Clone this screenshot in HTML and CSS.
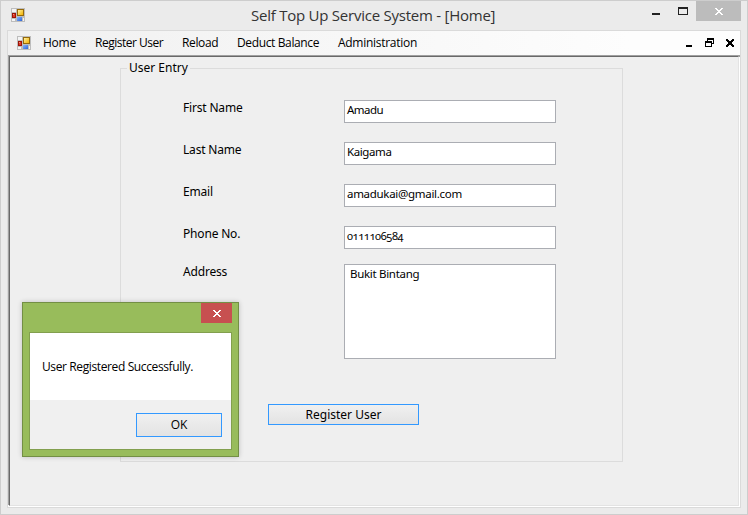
FILE: index.html
```html
<!DOCTYPE html>
<html lang="en">
<head>
<meta charset="utf-8">
<title>Self Top Up Service System - [Home]</title>
<link rel="stylesheet" href="styles.css">
</head>
<body>
<svg class="defs" width="0" height="0">
  <defs>
    <linearGradient id="gold" x2="1" y2="1"><stop offset="0" stop-color="#fff0a0"/><stop offset="1" stop-color="#f2b200"/></linearGradient>
    <linearGradient id="blue" x2="1" y2="1"><stop offset="0" stop-color="#86b4fa"/><stop offset="1" stop-color="#2f66d8"/></linearGradient>
    <symbol id="form-icon" viewBox="0 0 14 14">
      <path fill="#bdbdbd" d="M0 0h14v14H0z"/>
      <path fill="#f4f4f4" d="M1 1h4v3H1zM1 11h3v2H1zM12 10h1v3h-1z"/>
      <path fill="#9c1408" d="M1 5h4v5H1z"/><path fill="#e03c28" d="M2 6h2v3H2z"/><path fill="#f09080" d="M2 6h1v1H2z"/>
      <path fill="#95690c" d="M6 1h7v7H6z"/><path fill="url(#gold)" d="M7 2h5v5H7z"/>
      <path fill="url(#blue)" d="M6 9h5v4H6z"/>
    </symbol>
  </defs>
</svg>
<div class="window">
  <header class="titlebar">
    <svg class="app-icon"><use href="#form-icon"/></svg>
    <h1 class="title">Self Top Up Service System - [Home]</h1>
    <svg class="controls" width="100" height="20" shape-rendering="crispEdges">
      <path fill="#bcbcbc" d="M51 0h45v20H51z"/>
      <path fill="#222" d="M7 12h8v2H7z"/>
      <path fill="#222" fill-rule="evenodd" d="M33 6h10v8H33zM34 8v5h8V8z"/>
      <path fill="#fff" d="M70 7h2v1h1v1h2V8h1V7h2v1h-1v1h-1v1h-1v1h1v1h1v1h1v1h-2v-1h-1v-1h-2v1h-1v1h-2v-1h1v-1h1v-1h1v-1h-1V9h-1V8h-1z"/>
    </svg>
  </header>
  <div class="client">
    <nav class="menubar">
      <svg class="app-icon"><use href="#form-icon"/></svg>
      <a class="item m-home">Home</a><a class="item m-register">Register User</a><a class="item m-reload">Reload</a><a class="item m-deduct">Deduct Balance</a><a class="item m-admin">Administration</a>
      <svg class="mdi-controls" width="50" height="11" shape-rendering="crispEdges">
        <path d="M0 8h6v2H0z"/>
        <path fill-rule="evenodd" d="M21 1h7v6h-2v3h-7V4h2zM22 3v1h4v2h1V3zM20 6v3h5V6z"/>
        <path d="M40 2h2v1h1v1h2V3h1V2h2v2h-1v1h-1v2h1v1h1v2h-2V9h-1V8h-2v1h-1v1h-2V8h1V7h1V5h-1V4h-1z"/>
      </svg>
    </nav>
    <main class="workspace">
      <section class="group">
        <h2 class="legend">User Entry</h2>
        <div class="form">
          <span class="label">First Name</span><div class="field v-first">Amadu</div>
          <span class="label">Last Name</span><div class="field v-last">Kaigama</div>
          <span class="label">Email</span><div class="field">amadukai@gmail.com</div>
          <span class="label">Phone No.</span><div class="field v-phone">0111106584</div>
          <span class="label">Address</span><div class="field area">Bukit Bintang</div>
        </div>
        <div class="button submit">Register User</div>
      </section>
    </main>
  </div>
</div>
<div class="dialog">
  <div class="dialog-bar">
    <div class="dialog-close"><svg width="8" height="7" shape-rendering="crispEdges"><path fill="#fff" d="M0 0h2v1h1v1h2V1h1V0h2v1H7v1H6v1H5v1h1v1h1v1h1v1H6V6H5V5H3v1H2v1H0V6h1V5h1V4h1V3H2V2H1V1H0z"/></svg></div>
  </div>
  <div class="dialog-body">
    <div class="message">User Registered Successfully.</div>
    <div class="dialog-footer"><div class="button ok">OK</div></div>
  </div>
</div>
</body>
</html>
```
FILE: styles.css
```css
* { box-sizing: border-box; }
body { margin: 0; width: 748px; height: 515px; overflow: hidden; background: #ebebeb; color: #000; font-family: "Open Sans", sans-serif; font-size: 12px; white-space: nowrap; }
h1, h2 { margin: 0; font-weight: 400; }
.defs { display: block; }
.window { width: 748px; height: 515px; border: 1px solid #cdcdcd; padding: 0 6px 6px; background: #ebebeb; }
.titlebar { display: flex; height: 29px; align-items: flex-start; }
.app-icon { width: 14px; height: 14px; flex: none; }
.titlebar .app-icon { margin: 7px 0 0 4px; }
.title { flex: none; width: 246px; margin-left: 226px; font-size: 15px; line-height: 29px; letter-spacing: -0.24px; color: #333; }
.controls { margin-left: auto; margin-right: -4px; }
.client { display: flex; flex-direction: column; width: 734px; height: 478px; border: 1px solid #dadada; }
.menubar { display: flex; height: 24px; align-items: center; padding-left: 9px; background: linear-gradient(90deg, #f0f0f0, #fdfdfd 85%); }
.item { line-height: 24px; }
.m-home { width: 52px; margin-left: 12px; letter-spacing: -0.25px; }
.m-register { width: 87px; letter-spacing: -0.5px; }
.m-reload { width: 55px; letter-spacing: -0.35px; }
.m-deduct { width: 101px; letter-spacing: -0.37px; }
.m-admin { letter-spacing: -0.28px; }
.mdi-controls { align-self: flex-start; margin: 6px 4px 0 auto; }
.workspace { height: 450px; margin: 1px; padding: 11px 0 0 110px; background: #efefef; border: 1px solid; border-color: #696969 #e3e3e3 #e3e3e3 #696969; box-shadow: -1px -1px #a0a0a0, 1px 1px #fff, 1px -1px #a0a0a0, -1px 1px #fff; }
.group { width: 503px; height: 394px; border: 1px solid #dcdcdc; font-family: "Noto Sans", "Open Sans", sans-serif; font-size: 12px; }
.legend { width: 63px; height: 20px; margin: -10px 0 0 6px; padding-left: 2px; background: #efefef; font-size: 12px; line-height: 18px; }
.form { display: grid; grid-template-columns: 161px 212px; grid-template-rows: 42px 42px 42px 38px 95px; margin: 21px 0 0 62px; }
.label { line-height: 16px; letter-spacing: -0.18px; }
.field { height: 23px; padding-left: 2px; border: 1px solid #abadb3; background: #fff; font-size: 11.5px; line-height: 18px; letter-spacing: -0.3px; font-variant-numeric: oldstyle-nums; }
.v-first { letter-spacing: -0.5px; }
.v-last { letter-spacing: -0.4px; }
.v-phone { font-size: 11px; letter-spacing: -0.4px; }
.area { height: 95px; padding-left: 5px; }
.button { display: flex; justify-content: center; align-items: center; border: 1px solid #3399ff; background: linear-gradient(#f0f0f0, #e3e3e3); }
.submit { width: 151px; height: 21px; margin: 45px 0 0 147px; }
.dialog { position: absolute; left: 22px; top: 302px; width: 217px; height: 155px; border: 1px solid #738f45; padding: 0 6px; background: #98bc5b; box-shadow: 0 0 5px rgba(0,0,0,.2); }
.dialog-bar { display: flex; justify-content: flex-end; height: 29px; }
.dialog-close { display: flex; width: 31px; height: 20px; align-items: center; justify-content: center; background: #c75050; }
.dialog-body { height: 118px; border: 1px solid #829f4e; background: #f0f0f0; }
.message { height: 67px; padding-left: 12px; background: #fff; line-height: 68px; letter-spacing: -0.38px; }
.dialog-footer { display: flex; justify-content: flex-end; padding: 13px 9px 0 0; }
.ok { width: 86px; height: 24px; padding-bottom: 2px; }
```
